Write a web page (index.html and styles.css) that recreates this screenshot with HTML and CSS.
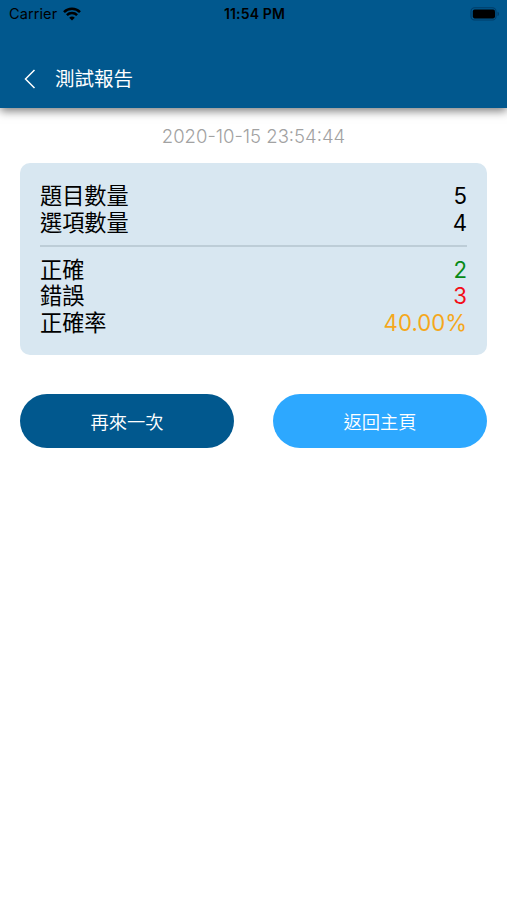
FILE: index.html
```html
<!DOCTYPE html>
<html lang="zh-Hant">
<head>
<meta charset="utf-8">
<title>測試報告</title>
<link rel="stylesheet" href="styles.css">
</head>
<body>
<header class="header">
  <div class="status">
    <div class="carrier"><span>Carrier</span>
      <svg class="wifi" width="18" height="14" viewBox="0 0 18 14" fill="none" stroke="#000" stroke-width="2.5"><path d="M1 5.1C5.4.7 12.6.7 17 5.1M3.9 8.1c2.8-2.8 7.4-2.8 10.2 0"/><path d="M9 13.5 6.2 10.7c1.5-1.5 4.1-1.5 5.6 0z" fill="#000" stroke="none"/></svg>
    </div>
    <div class="clock">11:54 PM</div>
    <div class="power">
      <svg width="30" height="14" viewBox="0 0 30 14"><rect x="1" y=".8" width="25" height="12.2" rx="3.6" fill="none" stroke="#003d68" stroke-width="1.1"/><rect x="2.8" y="2.6" width="22.2" height="8.8" rx="1.8"/><path d="M27.5 4.8c2 .7 2 3.6 0 4.3z" fill="#003d68"/></svg>
    </div>
  </div>
  <div class="nav">
    <svg class="back" width="12" height="20" viewBox="0 0 12 20" fill="none" stroke="#fff" stroke-width="1.5"><path d="M10.5 1 1.5 10l9 9"/></svg>
    <h1 class="title">測試報告</h1>
  </div>
</header>
<main class="content">
  <div class="date"><time>2020-10-15 23:54:44</time></div>
  <section class="card">
    <div class="row"><span>題目數量</span><span class="value">5</span></div>
    <div class="row"><span>選項數量</span><span class="value">4</span></div>
    <hr class="divider">
    <div class="row"><span>正確</span><span class="value good">2</span></div>
    <div class="row"><span>錯誤</span><span class="value bad">3</span></div>
    <div class="row"><span>正確率</span><span class="value rate">40.00%</span></div>
  </section>
  <div class="actions">
    <button class="btn primary">再來一次</button>
    <button class="btn secondary">返回主頁</button>
  </div>
</main>
</body>
</html>
```
FILE: styles.css
```css
* { box-sizing: border-box; }
body {
  margin: 0;
  background: #fff;
  color: #000;
  font-family: Inter, "Noto Sans CJK TC", sans-serif;
}
.header {
  height: 108px;
  background: #01588e;
  box-shadow: 0 3px 9px rgba(0, 0, 0, .52);
}
.status {
  display: grid;
  grid-template-columns: 1fr auto 1fr;
  height: 27px;
  padding: 0 7px 0 9px;
  align-items: center;
}
.carrier {
  display: flex;
  align-items: center;
  gap: 6px;
  font-size: 14.5px;
  letter-spacing: .1px;
}
.wifi { display: block; }
.clock { font-size: 14px; font-weight: 600; letter-spacing: .15px; }
.power { display: flex; justify-content: flex-end; }
.nav {
  display: flex;
  align-items: center;
  height: 52px;
  margin-top: 27px;
  margin-bottom: 0;
  padding: 0 24px;
  height: 50px;
}
.back { flex: none; }
.title {
  margin: 0 0 0 19px;
  color: #fff;
  font-size: 19.5px;
  font-weight: 400;
  line-height: 28px;
}
.content { padding: 0 20px; }
.date {
  height: 55px;
  line-height: 56px;
  text-align: center;
  color: #a2a2a2;
  font-size: 18.5px;
  font-weight: 300;
}
.card {
  height: 192px;
  padding: 20px 20px 0;
  border-radius: 10px;
  background: #d8e7f1;
}
.row {
  display: flex;
  justify-content: space-between;
  height: 26.6px;
  line-height: 26.6px;
  font-size: 22.2px;
}
.good { color: #078a17; }
.bad { color: #f30d18; }
.rate { color: #f5a81c; }
.divider {
  height: 2px;
  margin: 8.5px 0 10px;
  border: 0;
  background: #bdcdd7;
}
.actions {
  display: grid;
  grid-template-columns: 1fr 1fr;
  gap: 39px;
  margin-top: 39px;
}
.btn {
  height: 54px;
  padding: 0;
  border: 0;
  border-radius: 27px;
  color: #fff;
  font: 350 18.3px/54px "Noto Sans CJK TC", sans-serif;
}
.primary { background: #01588e; }
.secondary { background: #2da8ff; }
```
